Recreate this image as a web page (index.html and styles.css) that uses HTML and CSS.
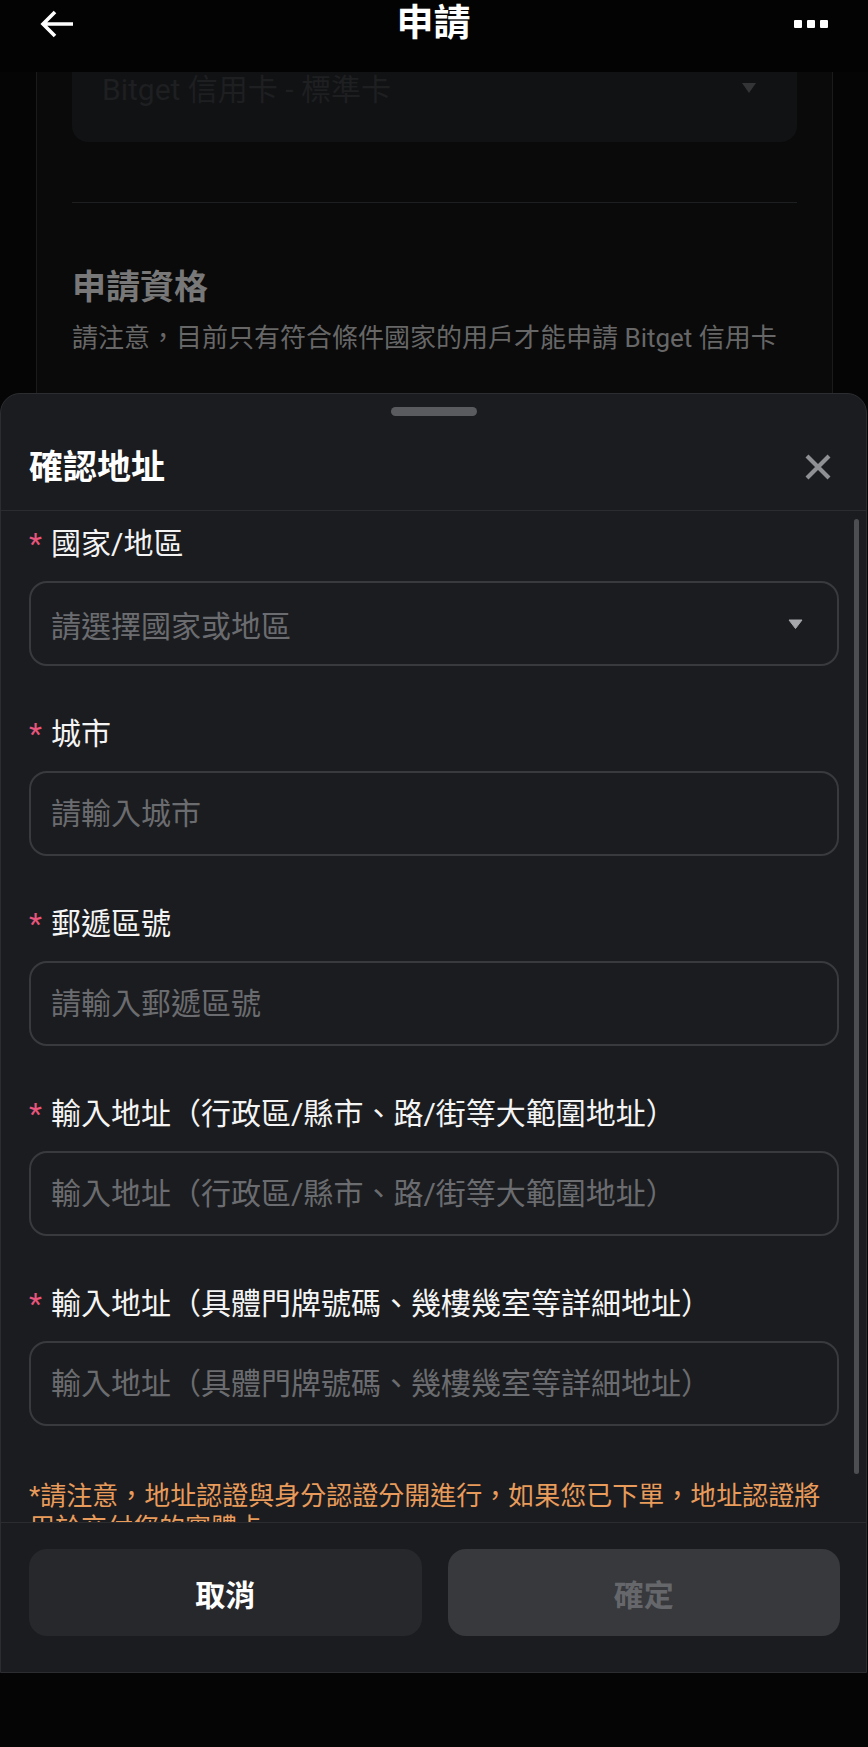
FILE: index.html
```html
<!DOCTYPE html>
<html lang="zh-Hant">
<head>
    <meta charset="UTF-8">
    <meta name="viewport" content="width=device-width, initial-scale=1.0">
    <title>申請</title>
    <link rel="stylesheet" href="styles.css">
</head>
<body>
    <div class="topbar">
        <svg class="back" width="36" height="30" viewBox="0 0 36 30">
            <path d="M34 15H4M16 3L4 15l12 12" fill="none" stroke="#fff" stroke-width="3.6"/>
        </svg>
        <span class="topbar-title">申請</span>
        <svg class="more" width="34" height="8" viewBox="0 0 34 8">
            <rect x="0" y="0" width="8" height="8" rx="1" fill="#fff"/>
            <rect x="13" y="0" width="8" height="8" rx="1" fill="#fff"/>
            <rect x="26" y="0" width="8" height="8" rx="1" fill="#fff"/>
        </svg>
    </div>

    <div class="bg-card">
        <div class="bg-select">
            <span>Bitget 信用卡 - 標準卡</span>
            <svg width="16" height="12" viewBox="0 0 16 12"><path d="M1 1h14L8 11z" fill="#333436"/></svg>
        </div>
        <div class="bg-divider"></div>
        <div class="bg-title">申請資格</div>
        <div class="bg-text">請注意，目前只有符合條件國家的用戶才能申請 Bitget 信用卡</div>
    </div>

    <div class="sheet">
        <div class="handle"></div>
        <div class="sheet-head">
            <span class="sheet-title">確認地址</span>
            <svg class="close" width="28" height="28" viewBox="0 0 28 28">
                <path d="M3 3l22 22M25 3L3 25" stroke="#8f9094" stroke-width="4.2"/>
            </svg>
        </div>
        <div class="sheet-body">
            <div class="field">
                <div class="label"><span class="req">*</span>國家/地區</div>
                <div class="box select">
                    <span class="ph">請選擇國家或地區</span>
                    <svg width="15" height="10" viewBox="0 0 15 10"><path d="M1 1h13L7.5 9.5z" fill="#a6a7ab" stroke="#a6a7ab" stroke-width="1" stroke-linejoin="round"/></svg>
                </div>
            </div>
            <div class="field">
                <div class="label"><span class="req">*</span>城市</div>
                <input class="box" type="text" placeholder="請輸入城市">
            </div>
            <div class="field">
                <div class="label"><span class="req">*</span>郵遞區號</div>
                <input class="box" type="text" placeholder="請輸入郵遞區號">
            </div>
            <div class="field">
                <div class="label"><span class="req">*</span>輸入地址（行政區/縣市、路/街等大範圍地址）</div>
                <input class="box" type="text" placeholder="輸入地址（行政區/縣市、路/街等大範圍地址）">
            </div>
            <div class="field">
                <div class="label"><span class="req">*</span>輸入地址（具體門牌號碼、幾樓幾室等詳細地址）</div>
                <input class="box" type="text" placeholder="輸入地址（具體門牌號碼、幾樓幾室等詳細地址）">
            </div>
            <p class="note">*請注意，地址認證與身分認證分開進行，如果您已下單，地址認證將用於交付您的實體卡。</p>
            <div class="scrollbar"></div>
        </div>
        <div class="sheet-foot">
            <button class="btn cancel">取消</button>
            <button class="btn ok">確定</button>
        </div>
    </div>
</body>
</html>
```

FILE: styles.css
```css
html, body {
    margin: 0;
    padding: 0;
}
body {
    width: 868px;
    height: 1747px;
    overflow: hidden;
    background-color: #050505;
    font-family: Roboto, "Noto Sans CJK TC", sans-serif;
    color: #fff;
}
.topbar {
    height: 72px;
    box-sizing: border-box;
    padding: 0 40px 24px 39px;
    display: grid;
    grid-template-columns: 1fr auto 1fr;
    align-items: center;
    background-color: #030303;
}
.topbar-title {
    font-size: 37px;
    font-weight: 700;
    line-height: 48px;
}
.more {
    justify-self: end;
}

/* page behind the sheet, already dimmed */
.bg-card {
    height: 330px;
    margin: 0 35px 0 36px;
    padding: 0 35px;
    overflow: hidden;
    border-left: 1px solid #1b1b1d;
    border-right: 1px solid #1b1b1d;
    background-color: #0a0a0b;
}
.bg-select {
    height: 90px;
    margin-top: -20px;
    box-sizing: border-box;
    padding: 18px 40px 0 30px;
    display: flex;
    justify-content: space-between;
    border-radius: 16px;
    background-color: #111214;
    color: #1e1f21;
    font-size: 30px;
    line-height: 40px;
}
.bg-select span {
    align-self: flex-start;
}
.bg-select svg {
    align-self: flex-start;
    margin-top: 12px;
}
.bg-divider {
    margin-top: 60px;
    height: 1px;
    background-color: #1e1f21;
}
.bg-title {
    margin-top: 62px;
    font-size: 34px;
    font-weight: 700;
    line-height: 44px;
    color: #787878;
}
.bg-text {
    margin-top: 11px;
    font-size: 26px;
    line-height: 36px;
    color: #676767;
}

/* bottom sheet */
.sheet {
    position: absolute;
    top: 393px;
    left: 0;
    width: 867px;
    height: 1280px;
    box-sizing: border-box;
    display: flex;
    flex-direction: column;
    border: 1px solid #2c2d31;
    border-radius: 20px 20px 0 0;
    background-color: #1b1c1f;
}
.handle {
    width: 86px;
    height: 9px;
    margin: 13px auto 0;
    border-radius: 5px;
    background-color: #5a5b5f;
}
.sheet-head {
    height: 95px;
    box-sizing: border-box;
    padding: 28px 34px 21px 28px;
    display: flex;
    justify-content: space-between;
    align-items: center;
    border-bottom: 1px solid #2b2c30;
}
.sheet-title {
    font-size: 34px;
    font-weight: 700;
    line-height: 46px;
}
.sheet-body {
    position: relative;
    height: 1011px;
    box-sizing: border-box;
    padding: 13px 27px 0 28px;
    overflow: hidden;
}
.field {
    margin-bottom: 48px;
}
.label {
    font-size: 30px;
    line-height: 40px;
    color: #f4f4f4;
    white-space: nowrap;
}
.req {
    display: inline-block;
    width: 22px;
    color: #e9557c;
    font-family: Roboto, sans-serif;
}
.box {
    display: flex;
    align-items: center;
    justify-content: space-between;
    width: 100%;
    height: 85px;
    box-sizing: border-box;
    margin: 17px 0 0;
    padding: 0 34px 0 20px;
    border: 2px solid #393a3e;
    border-radius: 18px;
    background-color: transparent;
    font-family: Roboto, "Noto Sans CJK TC", sans-serif;
    font-size: 30px;
    color: #fff;
    outline: none;
}
.box::placeholder {
    color: #6b6c70;
}
.ph {
    color: #6b6c70;
}
.note {
    margin: 0;
    padding-top: 6px;
    font-size: 26px;
    line-height: 32px;
    color: #e89b5a;
}
.scrollbar {
    position: absolute;
    top: 8px;
    right: 7px;
    width: 5px;
    height: 955px;
    border-radius: 3px;
    background-color: #4d4e52;
}
.sheet-foot {
    display: grid;
    grid-template-columns: 1fr 1fr;
    gap: 26px;
    padding: 26px 26px 35px 28px;
    border-top: 1px solid #2b2c30;
}
.btn {
    height: 87px;
    border: none;
    border-radius: 18px;
    font-family: Roboto, "Noto Sans CJK TC", sans-serif;
    font-size: 30px;
    font-weight: 700;
}
.cancel {
    background-color: #27282c;
    color: #fff;
}
.ok {
    background-color: #38393d;
    color: #66676b;
}
```
